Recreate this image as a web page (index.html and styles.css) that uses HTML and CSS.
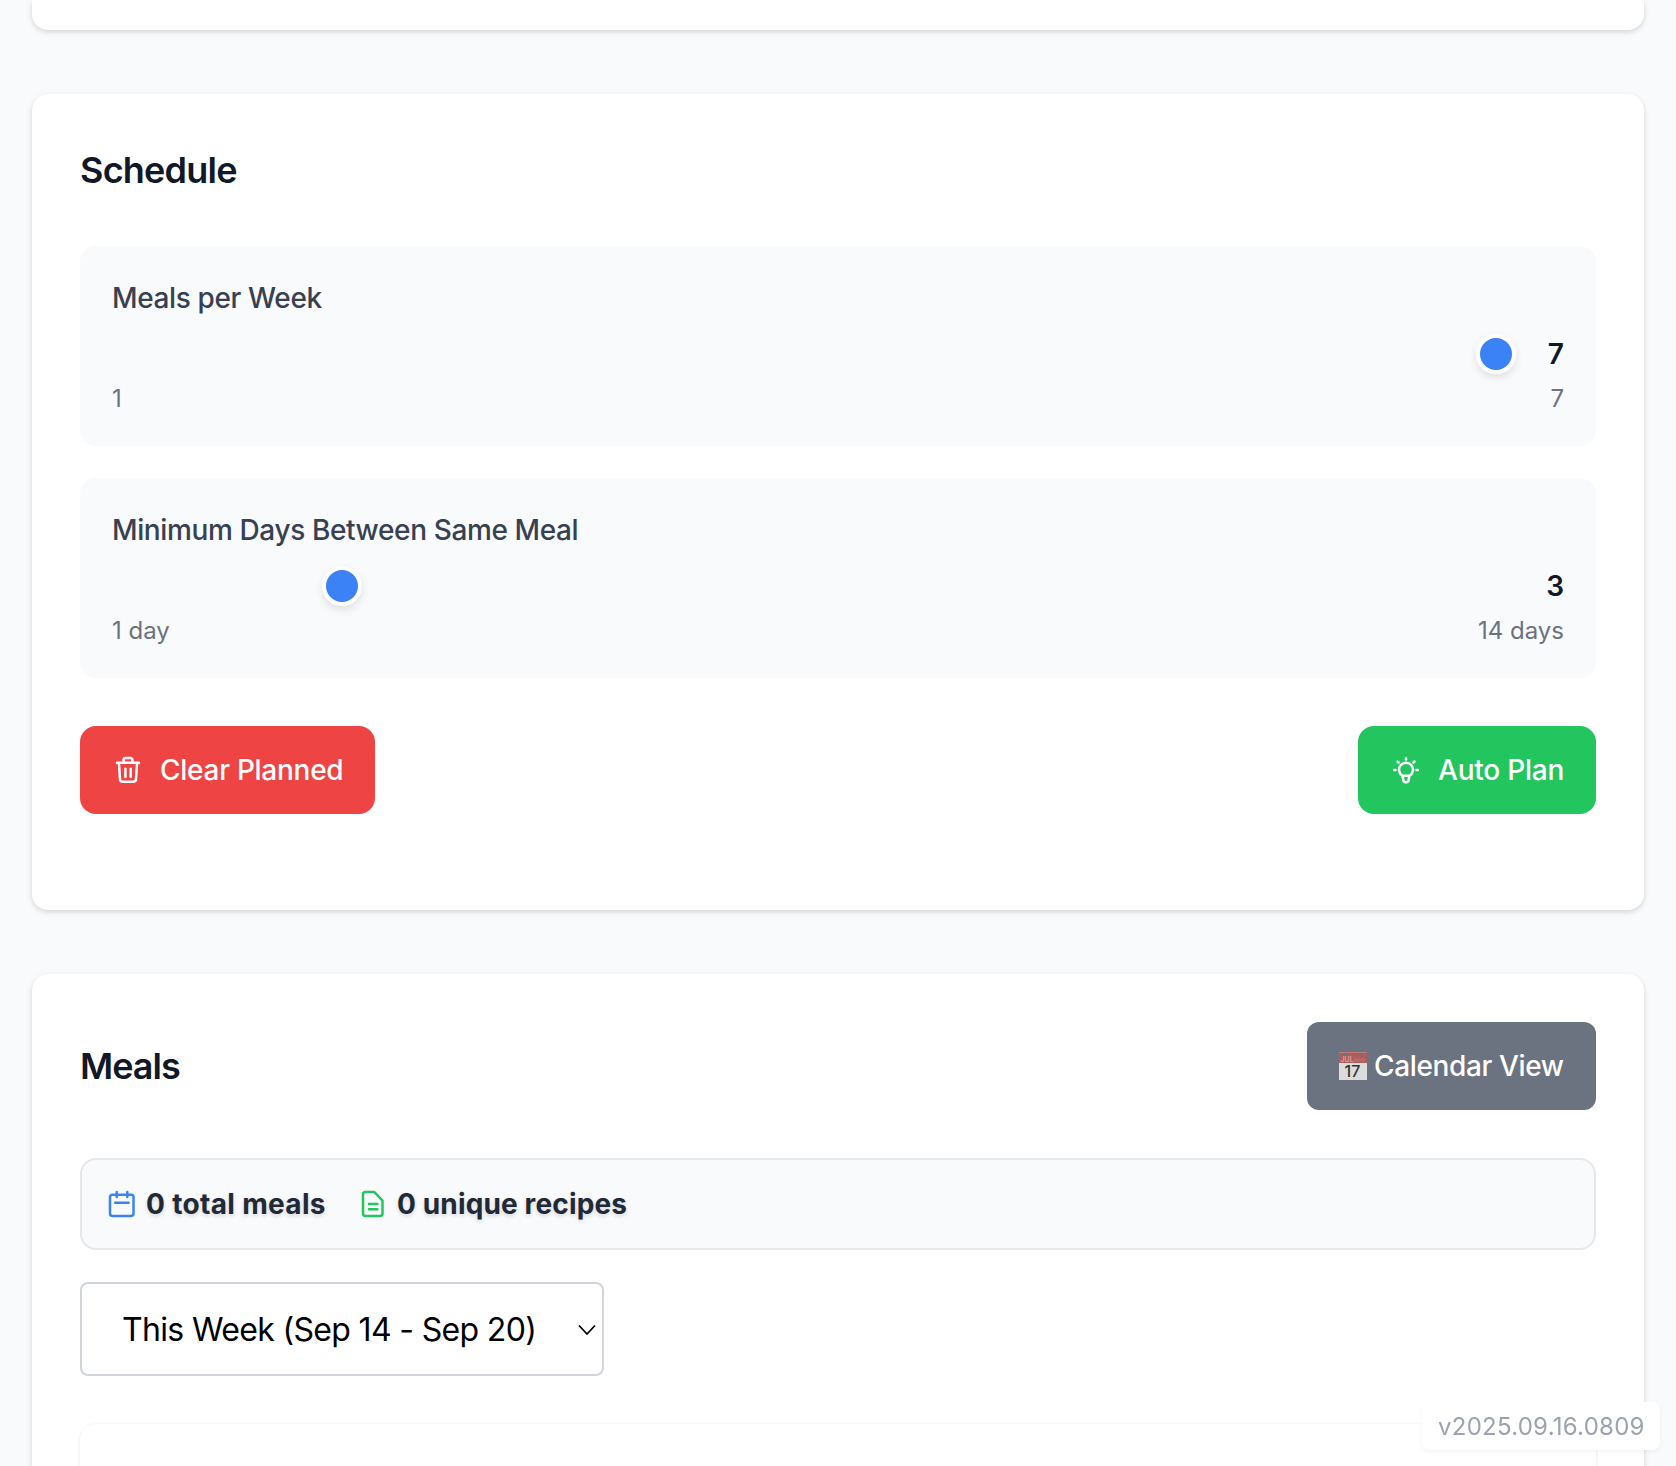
FILE: index.html
```html
<!DOCTYPE html>
<html lang="en">
<head>
<meta charset="utf-8">
<title>Meal Planner</title>
<link rel="stylesheet" href="styles.css">
</head>
<body>
<main class="page">
  <section class="card card-previous"></section>

  <section class="card card-schedule">
    <h2 class="title"><span class="t-schedule">Schedule</span></h2>
    <div class="panels">
      <div class="panel">
        <label class="label" for="meals">Meals per Week</label>
        <div class="slider-row">
          <input class="slider" id="meals" type="range" min="1" max="7" value="7">
          <span class="value">7</span>
        </div>
        <div class="range"><span>1</span><span>7</span></div>
      </div>
      <div class="panel">
        <label class="label" for="days">Minimum Days Between Same Meal</label>
        <div class="slider-row">
          <input class="slider" id="days" type="range" min="1" max="14" value="3">
          <span class="value">3</span>
        </div>
        <div class="range"><span>1 day</span><span>14 days</span></div>
      </div>
    </div>
    <div class="actions">
      <button class="btn btn-clear">
        <svg class="icon" viewBox="0 0 32 32"><path d="M5 8.700h22M11.600 8.500V5.800a1.800 1.800 0 0 1 1.800-1.800h5.200a1.800 1.800 0 0 1 1.800 1.800v2.700M6.900 9l1.100 16.200a2.700 2.700 0 0 0 2.700 2.600h10.600a2.700 2.700 0 0 0 2.700-2.600L25.100 9M13.400 14.700v8.400M18.700 14.700v8.400"/></svg>
        <span class="t-clear">Clear Planned</span>
      </button>
      <button class="btn btn-auto">
        <svg class="icon" viewBox="0 0 32 32"><path d="M16 4.200v1.300M4.200 16h1.300M26.500 16h1.300M7.600 7.600l.9.900M24.400 7.600l-.9.900M12.600 21.800a7 7 0 1 1 6.800 0zM12.600 21.800l.7 4.200a2.700 2.200 0 0 0 5.400 0l.7-4.200"/></svg>
        <span class="t-auto">Auto Plan</span>
      </button>
    </div>
  </section>

  <section class="card card-meals">
    <header class="meals-head">
      <h2 class="title"><span class="t-meals">Meals</span></h2>
      <button class="btn btn-view">
        <svg class="emoji" viewBox="0 0 28 28"><path fill="#dcdcdc" d="M0 0h28v28H0z"/><path fill="#af5c5c" d="M0 0h28v11H0z"/><path stroke="#c07c7c" d="M0 .5h28"/><circle cx="6.300" cy="2.800" r="1.600" fill="#6b7280"/><circle cx="21.700" cy="2.800" r="1.600" fill="#6b7280"/><text class="emoji-month" x="1.500" y="9.800">JUL</text><path stroke="#b66a6a" stroke-width="3" d="M15 8h11"/><text class="emoji-day" x="13.500" y="25" text-anchor="middle">17</text></svg>
        <span class="t-view">Calendar View</span>
      </button>
    </header>
    <div class="stats">
      <div class="stat">
        <svg class="icon icon-blue" viewBox="0 0 32 32"><path d="M6.300 6.800h18.900a2.300 2.300 0 0 1 2.300 2.300v16.500a2.300 2.300 0 0 1-2.300 2.300H6.300A2.300 2.300 0 0 1 4 25.600V9.100a2.300 2.300 0 0 1 2.300-2.300zM10.700 4v5M21.300 4v5M9.200 14.700h13.500"/></svg>
        <span class="t-total">0 total meals</span>
      </div>
      <div class="stat">
        <svg class="icon icon-green" viewBox="0 0 32 32"><path d="M8.400 4h8.900l8.200 8.600v13a2.400 2.400 0 0 1-2.400 2.400H8.400A2.400 2.400 0 0 1 6 25.600V6.400A2.400 2.400 0 0 1 8.400 4zM12 16h8.400M12 21.300h8.400"/></svg>
        <span class="t-unique">0 unique recipes</span>
      </div>
    </div>
    <div class="select" role="combobox" aria-expanded="false">
      <span class="t-week">This Week (Sep 14 - Sep 20)</span>
      <svg class="chevron" viewBox="0 0 18 12"><path d="M1 1.500l8 8.500 8-8.500"/></svg>
    </div>
    <div class="card-inner"></div>
  </section>
</main>
<div class="version">v2025.09.16.0809</div>
</body>
</html>
```
FILE: styles.css
```css
* { box-sizing: border-box; }

body {
  margin: 0;
  height: 1466px;
  overflow: hidden;
  background: #f9fafb;
  color: #111827;
  font-family: Inter, "Liberation Sans", sans-serif;
  -webkit-font-smoothing: antialiased;
}

.page {
  display: flex;
  flex-direction: column;
  gap: 64px;
  height: 1466px;
  padding: 0 32px;
  overflow: hidden;
}

.card {
  flex: none;
  padding: 48px;
  border-radius: 16px;
  background: #fff;
  box-shadow: 0 2px 6px rgba(0, 0, 0, .1), 0 2px 4px rgba(0, 0, 0, .06);
}
.card-previous { height: 30px; padding: 0; border-radius: 0 0 16px 16px; }
.card-schedule { height: 816px; }
.card-meals { height: 560px; }

.title { margin: 0; font-size: 36px; font-weight: 600; line-height: 56px; }
.t-schedule { letter-spacing: -.78px; }
.t-meals { letter-spacing: -1px; }

.panels { display: flex; flex-direction: column; gap: 32px; margin-top: 48px; }
.panel { height: 200px; padding: 32px; border-radius: 16px; background: #f9fafb; }
.label {
  display: block;
  color: #374151;
  font-size: 28px;
  font-weight: 500;
  letter-spacing: -.38px;
  line-height: 40px;
}
.slider-row { display: flex; align-items: center; height: 40px; margin-top: 16px; }
.slider {
  flex: 1;
  height: 16px;
  margin: 0;
  appearance: none;
  -webkit-appearance: none;
  background: transparent;
}
.slider::-webkit-slider-thumb {
  -webkit-appearance: none;
  width: 40px;
  height: 40px;
  border: 4px solid #fff;
  border-radius: 50%;
  background: #3b82f6;
  box-shadow: 0 4px 8px rgba(0, 0, 0, .1);
}
.value { width: 48px; font-size: 28px; font-weight: 600; line-height: 40px; text-align: right; }
.range {
  display: flex;
  justify-content: space-between;
  margin-top: 9px;
  color: #6b7280;
  font-size: 24px;
  line-height: 32px;
}

.actions { display: flex; justify-content: space-between; margin-top: 48px; }
.btn {
  display: flex;
  align-items: center;
  gap: 16px;
  height: 88px;
  padding: 0 32px;
  border: 0;
  border-radius: 16px;
  color: #fff;
  font-family: inherit;
  font-size: 28px;
  font-weight: 500;
  line-height: 40px;
  white-space: nowrap;
}
.btn-clear { width: 295px; background: #ef4444; }
.btn-auto { width: 238px; background: #22c55e; }
.btn-view { width: 289px; gap: 7px; border-radius: 12px; background: #6b7280; }
.t-clear { letter-spacing: -.27px; }
.t-auto { letter-spacing: -.22px; }
.t-view { letter-spacing: -.36px; }

.icon {
  flex: none;
  width: 32px;
  height: 32px;
  fill: none;
  stroke: currentColor;
  stroke-width: 2.5;
  stroke-linecap: round;
  stroke-linejoin: round;
}
.icon-blue { color: #3b82f6; }
.icon-green { color: #22c55e; }
.emoji { flex: none; width: 28px; height: 28px; }
.emoji-month { fill: #cf9c9c; font-size: 7px; font-weight: 700; }
.emoji-day { fill: #333; font-size: 16px; }

.meals-head { display: flex; align-items: center; justify-content: space-between; }
.stats {
  display: flex;
  align-items: center;
  gap: 32px;
  height: 92px;
  margin-top: 48px;
  padding: 0 24px;
  border: 2px solid #e5e7eb;
  border-radius: 16px;
  background: #f9fafb;
}
.stat {
  display: flex;
  align-items: center;
  gap: 8px;
  color: #1f2937;
  font-size: 28px;
  font-weight: 700;
  line-height: 40px;
  text-shadow: 0 2px 4px rgba(0, 0, 0, .15);
  white-space: nowrap;
}
.stat:first-child { width: 219px; }
.t-total { letter-spacing: .33px; }
.t-unique { letter-spacing: .14px; }

.select {
  display: flex;
  align-items: center;
  justify-content: space-between;
  width: 524px;
  height: 94px;
  margin-top: 32px;
  padding: 1px 6px 0 40px;
  border: 2px solid #d1d5db;
  border-radius: 8px;
  background: #fff;
  color: #000;
  font-size: 32px;
  letter-spacing: -.66px;
  line-height: 48px;
  white-space: nowrap;
}
.chevron { width: 18px; height: 12px; fill: none; stroke: #000; stroke-width: 1.8; }

.card-inner {
  height: 120px;
  margin-top: 48px;
  border-radius: 16px;
  background: #fff;
  box-shadow: 0 2px 4px rgba(0, 0, 0, .06), 0 0 3px rgba(0, 0, 0, .06);
}

.version {
  position: fixed;
  right: 16px;
  bottom: 16px;
  width: 238px;
  height: 48px;
  padding: 9px 16px 7px;
  border-radius: 8px;
  background: #fff;
  box-shadow: 0 2px 4px rgba(0, 0, 0, .05);
  color: #9ca3af;
  font-size: 24px;
  letter-spacing: .26px;
  line-height: 32px;
  white-space: nowrap;
}
```
